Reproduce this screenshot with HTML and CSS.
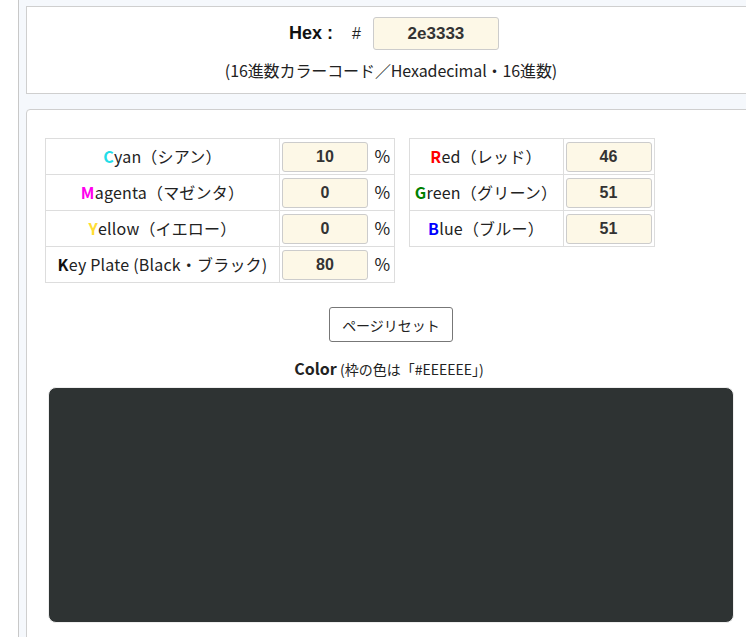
FILE: index.html
```html
<!DOCTYPE html>
<html lang="ja">
<head>
<meta charset="utf-8">
<link rel="stylesheet" href="styles.css">
</head>
<body>
<div class="page">
  <div class="gutter"></div>
  <div class="main">
    <section class="card hex-card">
      <div class="hex-row">
        <span class="hex-label">Hex :</span>
        <span class="hash">#</span>
        <input class="field hex-field" type="text" value="2e3333">
      </div>
      <p class="hex-note">(16進数カラーコード／Hexadecimal・16進数)</p>
    </section>
    <section class="card body-card">
      <div class="tables">
        <table class="grid cmyk">
          <tr><td class="label"><b class="c">C</b>yan（シアン）</td><td class="inp"><input class="field" value="10"></td><td class="pct">%</td></tr>
          <tr><td class="label"><b class="m">M</b>agenta（マゼンタ）</td><td class="inp"><input class="field" value="0"></td><td class="pct">%</td></tr>
          <tr><td class="label"><b class="y">Y</b>ellow（イエロー）</td><td class="inp"><input class="field" value="0"></td><td class="pct">%</td></tr>
          <tr><td class="label"><b class="k">K</b>ey Plate (Black・ブラック)</td><td class="inp"><input class="field" value="80"></td><td class="pct">%</td></tr>
        </table>
        <table class="grid rgb">
          <tr><td class="label"><b class="r">R</b>ed（レッド）</td><td class="inp"><input class="field" value="46"></td></tr>
          <tr><td class="label"><b class="g">G</b>reen（グリーン）</td><td class="inp"><input class="field" value="51"></td></tr>
          <tr><td class="label"><b class="bl">B</b>lue（ブルー）</td><td class="inp"><input class="field" value="51"></td></tr>
        </table>
      </div>
      <div class="reset-row"><button class="reset">ページリセット</button></div>
      <p class="color-title"><b>Color</b> (枠の色は「#EEEEEE」)</p>
      <div class="swatch" style="background:#2e3333"></div>
    </section>
  </div>
</div>
</body>
</html>
```
FILE: styles.css
```css
html, body {
  margin: 0;
  padding: 0;
  width: 746px;
  height: 637px;
  overflow: hidden;
  background: #fff;
}
body {
  font-family: "Noto Sans CJK JP", "Noto Sans", sans-serif;
  color: #222;
}
.page {
  display: flex;
  height: 637px;
  overflow: hidden;
}
.gutter {
  width: 18px;
  flex: none;
  background: #fff;
  border-right: 1px solid #c8c8c8;
}
.main {
  flex: none;
  width: 760px;
  background: #f5f8fc;
  padding: 6px 0 0 7px;
}
.card {
  width: 728px;
  background: #fff;
  border: 1px solid #cfcfcf;
}
.hex-card {
  height: 86px;
  text-align: center;
}
.hex-row {
  display: flex;
  justify-content: center;
  align-items: center;
  padding-top: 10px;
  padding-left: 6px;
}
.hex-label {
  font-family: "Liberation Sans", Arial, sans-serif;
  font-weight: bold;
  font-size: 18px;
  color: #111;
  margin-right: 19px;
}
.hash {
  font-family: "Liberation Sans", Arial, sans-serif;
  font-size: 16px;
  margin-right: 12px;
}
.field {
  box-sizing: border-box;
  width: 86px;
  height: 30px;
  border: 1px solid #cccccc;
  border-radius: 3px;
  background: #fdf8e7;
  font-family: "Liberation Sans", Arial, sans-serif;
  font-weight: bold;
  font-size: 16px;
  color: #333;
  text-align: center;
  padding: 0;
}
.hex-field {
  width: 126px;
  height: 33px;
  font-size: 17px;
}
.hex-note {
  margin: 8px 0 0;
  font-size: 16px;
  color: #222;
  letter-spacing: -0.1px;
}
.body-card {
  margin-top: 15px;
  height: 540px;
  border-radius: 4px 0 0 0;
  padding: 28px 0 0 18px;
  box-sizing: border-box;
}
.tables {
  display: flex;
  align-items: flex-start;
  gap: 14px;
}
.grid {
  border-collapse: collapse;
  font-size: 16px;
}
.grid td {
  border: 1px solid #dddddd;
  height: 36px;
  padding: 0 0 2px;
  box-sizing: border-box;
}
.grid .label {
  text-align: center;
  letter-spacing: 0.2px;
}
.cmyk .label { width: 234px; }
.rgb .label { width: 154px; }
.grid .inp {
  padding: 0 2px;
  width: 90px;
}
.cmyk .pct {
  border-left: none;
  width: 24px;
  text-align: center;
  font-size: 17px;
  padding: 0 0 2px 1px;
}
.cmyk .inp { border-right: none; }
.label b { font-weight: bold; }
.c { color: #22dde8; }
.m { color: #ff00ee; }
.y { color: #ffdd33; }
.k { color: #111; }
.r { color: #ff0000; }
.g { color: #008000; }
.bl { color: #0000ff; }
.reset-row {
  display: flex;
  justify-content: center;
  padding-right: 16px;
  margin-top: 24px;
}
.reset {
  width: 124px;
  height: 35px;
  background: #fff;
  border: 1px solid #777;
  border-radius: 3px;
  font-family: "Noto Sans CJK JP", sans-serif;
  font-size: 14px;
  color: #222;
}
.color-title {
  margin: 14px 0 7px;
  text-align: center;
  padding-right: 20px;
  font-size: 14px;
}
.color-title b {
  font-size: 16px;
}
.swatch {
  margin-left: 3px;
  width: 686px;
  height: 236px;
  border: 1px solid #eeeeee;
  border-radius: 8px;
  box-sizing: border-box;
}
```
